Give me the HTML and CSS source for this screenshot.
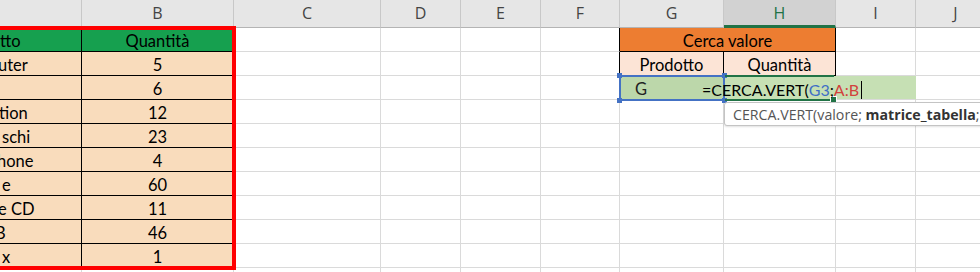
FILE: index.html
```html
<!DOCTYPE html>
<html lang="it">
<head>
    <meta charset="UTF-8">
    <meta name="viewport" content="width=device-width, initial-scale=1.0">
    <title>Cerca valore</title>
    <link rel="stylesheet" href="styles.css">
</head>
<body>
    <div class="sheet">
        <!-- intestazioni colonne -->
        <div class="row head">
            <div class="c"></div>
            <div class="c">B</div>
            <div class="c">C</div>
            <div class="c">D</div>
            <div class="c">E</div>
            <div class="c">F</div>
            <div class="c">G</div>
            <div class="c cur">H</div>
            <div class="c">I</div>
            <div class="c">J</div>
        </div>

        <div class="row">
            <div class="c t g l">tto</div>
            <div class="c t g">Quantità</div>
            <div class="c"></div><div class="c"></div><div class="c"></div>
            <div class="c bkr"></div>
            <div class="c box o span2">Cerca valore</div>
            <div class="c"></div><div class="c"></div>
        </div>
        <div class="row">
            <div class="c t p l"><span class="cut2">uter</span></div>
            <div class="c t p">5</div>
            <div class="c"></div><div class="c"></div><div class="c"></div>
            <div class="c bkr"></div>
            <div class="c box lp">Prodotto</div>
            <div class="c box lp">Quantità</div>
            <div class="c"></div><div class="c"></div>
        </div>
        <div class="row">
            <div class="c t p l"></div>
            <div class="c t p">6</div>
            <div class="c"></div><div class="c"></div><div class="c"></div>
            <div class="c"></div>
            <div class="c ed-ref l">G</div>
            <div class="c ed"></div>
            <div class="c ed"></div>
            <div class="c"></div>
        </div>
        <div class="row">
            <div class="c t p l"><span class="cut1">tion</span></div>
            <div class="c t p">12</div>
            <div class="c"></div><div class="c"></div><div class="c"></div><div class="c"></div>
            <div class="c"></div><div class="c"></div><div class="c"></div><div class="c"></div>
        </div>
        <div class="row">
            <div class="c t p l"><span class="pad">schi</span></div>
            <div class="c t p">23</div>
            <div class="c"></div><div class="c"></div><div class="c"></div><div class="c"></div>
            <div class="c"></div><div class="c"></div><div class="c"></div><div class="c"></div>
        </div>
        <div class="row">
            <div class="c t p l"><span class="cut3">hone</span></div>
            <div class="c t p">4</div>
            <div class="c"></div><div class="c"></div><div class="c"></div><div class="c"></div>
            <div class="c"></div><div class="c"></div><div class="c"></div><div class="c"></div>
        </div>
        <div class="row">
            <div class="c t p l"><span class="pad">e</span></div>
            <div class="c t p">60</div>
            <div class="c"></div><div class="c"></div><div class="c"></div><div class="c"></div>
            <div class="c"></div><div class="c"></div><div class="c"></div><div class="c"></div>
        </div>
        <div class="row">
            <div class="c t p l"><span class="cut2">e CD</span></div>
            <div class="c t p">11</div>
            <div class="c"></div><div class="c"></div><div class="c"></div><div class="c"></div>
            <div class="c"></div><div class="c"></div><div class="c"></div><div class="c"></div>
        </div>
        <div class="row">
            <div class="c t p l"><span class="cut5">B</span></div>
            <div class="c t p">46</div>
            <div class="c"></div><div class="c"></div><div class="c"></div><div class="c"></div>
            <div class="c"></div><div class="c"></div><div class="c"></div><div class="c"></div>
        </div>
        <div class="row">
            <div class="c t p l"><span class="pad">x</span></div>
            <div class="c t p">1</div>
            <div class="c"></div><div class="c"></div><div class="c"></div><div class="c"></div>
            <div class="c"></div><div class="c"></div><div class="c"></div><div class="c"></div>
        </div>
        <div class="row">
            <div class="c"></div><div class="c"></div><div class="c"></div><div class="c"></div><div class="c"></div>
            <div class="c"></div><div class="c"></div><div class="c"></div><div class="c"></div><div class="c"></div>
        </div>

        <!-- bordo rosso intorno alla tabella -->
        <div class="red-box"></div>

        <!-- riferimento G3 -->
        <div class="ref-box">
            <span class="hdl tl"></span><span class="hdl tr"></span>
            <span class="hdl bl"></span><span class="hdl br"></span>
        </div>

        <!-- cella attiva H3 -->
        <div class="active-cell"><span class="fill-hdl"></span></div>

        <!-- formula in modifica -->
        <div class="editor">=CERCA.VERT(<span class="r-blue">G3</span>;<span class="r-red">A:B</span><span class="caret"></span></div>

        <!-- suggerimento funzione -->
        <div class="tip">CERCA.VERT(valore;&nbsp;<b>matrice_tabella</b>;</div>
    </div>
</body>
</html>
```

FILE: styles.css
```css
:root {
    --grid: #dadada;
    --head-bg: #e6e6e6;
    --xl-green: #217346;
    --ref-blue: #4472c4;
    --green-fill: #16a04f;
    --peach: #f9dcbc;
    --orange: #ed7d31;
    --light-peach: #fce4d6;
    --edit-fill: #c6e0b4;
}

body {
    margin: 0;
    background: #fff;
    font-family: Lato, "Liberation Sans", sans-serif;
    overflow: hidden;
}

.sheet {
    position: relative;
    width: 980px;
    height: 272px;
    overflow: hidden;
}

.row {
    display: grid;
    grid-template-columns: 82px 152px 147px 80px 80px 79px 104px 112px 80px 80px;
    height: 24px;
}

.row.head {
    height: 28px;
}

.c {
    box-sizing: border-box;
    border-right: 1px solid var(--grid);
    border-bottom: 1px solid var(--grid);
    display: flex;
    align-items: center;
    justify-content: center;
    padding-top: 3px;
    font-size: 16.5px;
    color: #000;
    white-space: nowrap;
    overflow: hidden;
}

.head .c {
    background: var(--head-bg);
    border-right-color: #c8c8c8;
    border-bottom-color: #b4b4b4;
    align-items: flex-end;
    padding: 0 0 3px;
    font-family: "Open Sans", sans-serif;
    font-size: 16px;
    color: #444;
}

.head .c.cur {
    background: #d2d2d2;
    color: var(--xl-green);
    border-bottom: 3px solid var(--xl-green);
    padding-bottom: 1px;
}

/* testo allineato a sinistra */
.c.l {
    display: block;
    padding-top: 0;
    line-height: 26px;
    text-align: left;
}

/* tabella prodotti */
.c.t {
    border-right-color: #000;
    border-bottom-color: #000;
}

.g { background: var(--green-fill); }
.p { background: var(--peach); }

.cut1 { margin-left: -1px; }
.cut2 { margin-left: -2px; }
.cut3 { margin-left: -3px; }
.cut5 { margin-left: -5px; }
.pad { margin-left: 2px; }

/* tabella ricerca */
.bkr { border-right-color: #000; }

.c.box {
    border-right-color: #000;
    border-bottom-color: #000;
}

.span2 { grid-column: span 2; }
.o { background: var(--orange); }
.lp { background: var(--light-peach); }

.c.ed-ref {
    background: #bcd7aa;
    border-right-color: transparent;
    padding-left: 15px;
    color: #222;
}

.ed {
    background: var(--edit-fill);
    border-right-color: var(--edit-fill);
}

/* overlay */
.red-box {
    position: absolute;
    left: -10px;
    top: 26px;
    width: 246px;
    height: 244px;
    box-sizing: border-box;
    border: 4px solid #ff0000;
}

.ref-box {
    position: absolute;
    left: 619px;
    top: 75px;
    width: 106px;
    height: 26px;
    box-sizing: border-box;
    border: 2px solid var(--ref-blue);
}

.hdl {
    position: absolute;
    width: 5px;
    height: 5px;
    background: var(--ref-blue);
}

.hdl.tl { left: -4px; top: -4px; }
.hdl.tr { right: -4px; top: -4px; }
.hdl.bl { left: -4px; bottom: -4px; }
.hdl.br { right: -4px; bottom: -4px; }

.active-cell {
    position: absolute;
    left: 725px;
    top: 75px;
    width: 109px;
    height: 26px;
    box-sizing: border-box;
    border-top: 2px solid var(--xl-green);
    border-bottom: 2px solid var(--xl-green);
}

.fill-hdl {
    position: absolute;
    right: -3px;
    bottom: -4px;
    width: 5px;
    height: 5px;
    background: var(--xl-green);
    border: 1px solid #fff;
}

.editor {
    position: absolute;
    left: 702px;
    top: 76px;
    height: 24px;
    display: flex;
    align-items: center;
    padding-top: 3px;
    box-sizing: border-box;
    font-size: 16px;
    color: #000;
    white-space: nowrap;
}

.r-blue { color: #3f6fc6; }
.r-red { color: #d2423d; }

.caret {
    display: inline-block;
    width: 1px;
    height: 18px;
    margin-left: 2px;
    background: #000;
}

.tip {
    position: absolute;
    left: 724px;
    top: 102px;
    height: 24px;
    padding: 0 10px 0 8px;
    box-sizing: border-box;
    display: flex;
    align-items: center;
    background: #fff;
    border: 1px solid #c4c4c4;
    border-radius: 3px;
    box-shadow: 0 1px 2px rgba(0,0,0,0.12);
    font-family: "Open Sans", sans-serif;
    font-size: 14.2px;
    color: #555;
    white-space: nowrap;
}

.tip b {
    color: #333;
}
```
